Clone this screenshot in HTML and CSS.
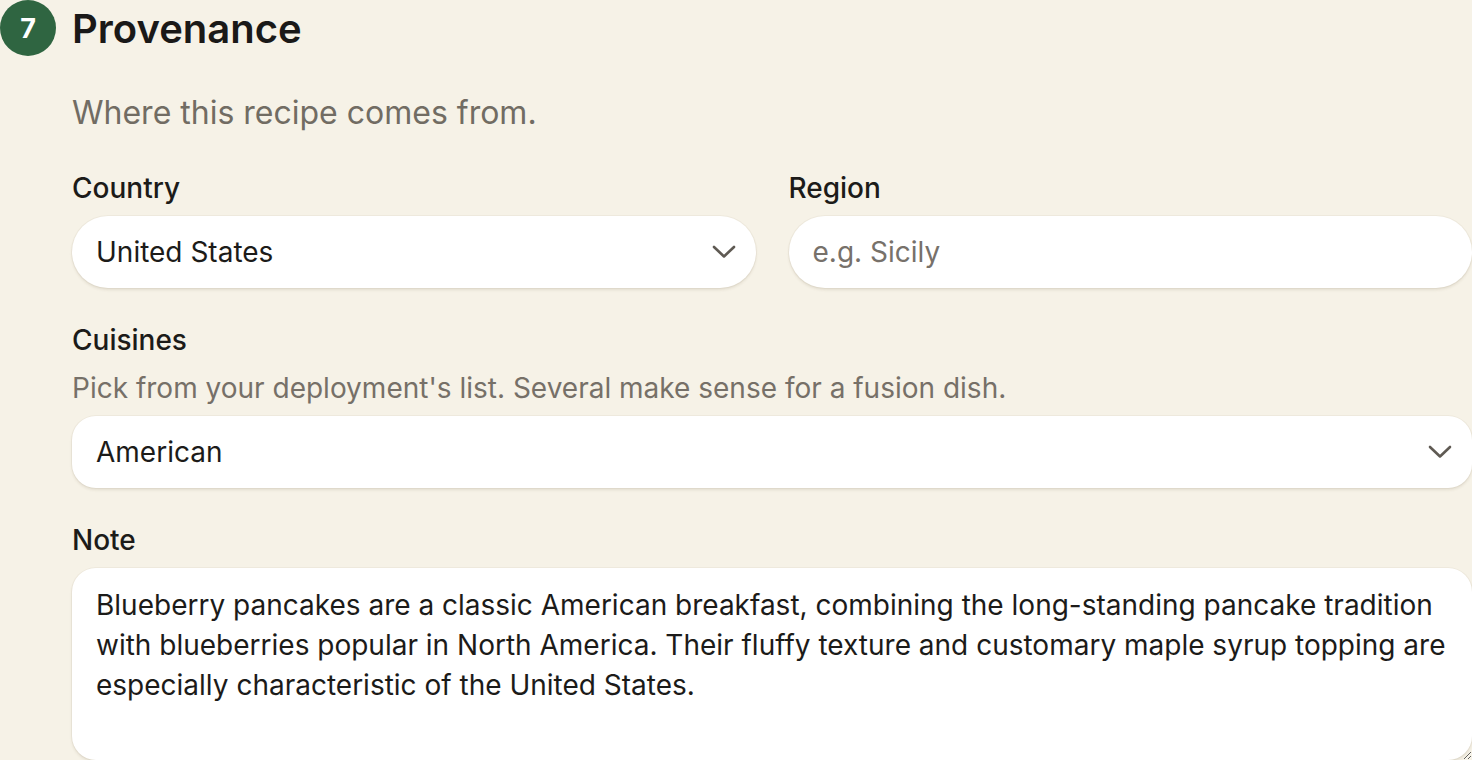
FILE: index.html
```html
<!DOCTYPE html>
<html lang="en">
<head>
<meta charset="utf-8">
<title>Provenance</title>
<link rel="stylesheet" href="styles.css">
</head>
<body>
<section class="section">
  <header class="section-head">
    <span class="badge">7</span>
    <h2 class="title">Provenance</h2>
  </header>
  <div class="section-body">
    <p class="lead">Where this recipe comes from.</p>
    <div class="row">
      <div class="field">
        <label class="label">Country</label>
        <div class="control select pill">
          <span class="value">United States</span>
          <svg class="chev" viewBox="0 0 24 14" width="24" height="14"><path d="M2 2 L12 11.5 L22 2" fill="none" stroke="#5f5a53" stroke-width="2.6" stroke-linecap="round" stroke-linejoin="round"/></svg>
        </div>
      </div>
      <div class="field">
        <label class="label">Region</label>
        <div class="control pill">
          <span class="placeholder">e.g. Sicily</span>
        </div>
      </div>
    </div>
    <div class="field">
      <label class="label">Cuisines</label>
      <p class="hint">Pick from your deployment's list. Several make sense for a fusion dish.</p>
      <div class="control select rounded">
        <span class="value">American</span>
        <svg class="chev" viewBox="0 0 24 14" width="24" height="14"><path d="M2 2 L12 11.5 L22 2" fill="none" stroke="#5f5a53" stroke-width="2.6" stroke-linecap="round" stroke-linejoin="round"/></svg>
      </div>
    </div>
    <div class="field">
      <label class="label">Note</label>
      <textarea class="note">Blueberry pancakes are a classic American breakfast, combining the long-standing pancake tradition with blueberries popular in North America. Their fluffy texture and customary maple syrup topping are especially characteristic of the United States.</textarea>
    </div>
  </div>
</section>
</body>
</html>
```

FILE: styles.css
```css
html, body {
  margin: 0;
  padding: 0;
  background: #f6f2e7;
  overflow: hidden;
}
body {
  font-family: Inter, "Noto Sans", sans-serif;
  color: #1c1b19;
  width: 1472px;
  height: 760px;
}
.section {
  display: flex;
  flex-direction: column;
}
.section-head {
  display: flex;
  align-items: center;
  gap: 16px;
  height: 56px;
}
.badge {
  width: 56px;
  height: 56px;
  border-radius: 50%;
  background: #2f6541;
  color: #fff;
  font-weight: 700;
  font-size: 27px;
  display: flex;
  align-items: center;
  justify-content: center;
  flex: none;
}
.title {
  margin: 0;
  font-size: 40px;
  font-weight: 600;
  color: #1a1918;
}
.section-body {
  padding-left: 72px;
  display: flex;
  flex-direction: column;
  gap: 32px;
}
.lead {
  margin: 37px 0 0;
  font-size: 32px;
  line-height: 40px;
  color: #716c63;
}
.row {
  display: grid;
  grid-template-columns: 1fr 1fr;
  gap: 33px;
  margin-top: 3px;
}
.field {
  display: flex;
  flex-direction: column;
}
.label {
  font-size: 28px;
  font-weight: 500;
  line-height: 40px;
  margin-bottom: 8px;
  color: #1c1b19;
}
.hint {
  margin: 0 0 8px;
  font-size: 28px;
  line-height: 40px;
  color: #767068;
}
.control {
  height: 72px;
  background: #fff;
  box-sizing: border-box;
  padding: 0 20px 0 24px;
  display: flex;
  align-items: center;
  justify-content: space-between;
  font-size: 28px;
  box-shadow: 0 2px 3px rgba(90, 75, 40, 0.12), 0 0 0 1px rgba(120, 100, 60, 0.05);
}
.pill {
  border-radius: 36px;
}
.rounded {
  border-radius: 24px;
}
.value {
  color: #1c1b19;
}
.placeholder {
  color: #77716a;
}
.chev {
  flex: none;
}
.note {
  display: block;
  width: 100%;
  height: 192px;
  box-sizing: border-box;
  border: none;
  outline: none;
  border-radius: 24px;
  background: #fff;
  padding: 17px 24px;
  font-family: Inter, "Noto Sans", sans-serif;
  font-size: 28px;
  line-height: 40px;
  color: #1c1b19;
  box-shadow: 0 2px 3px rgba(90, 75, 40, 0.12), 0 0 0 1px rgba(120, 100, 60, 0.05);
  resize: vertical;
}
```
